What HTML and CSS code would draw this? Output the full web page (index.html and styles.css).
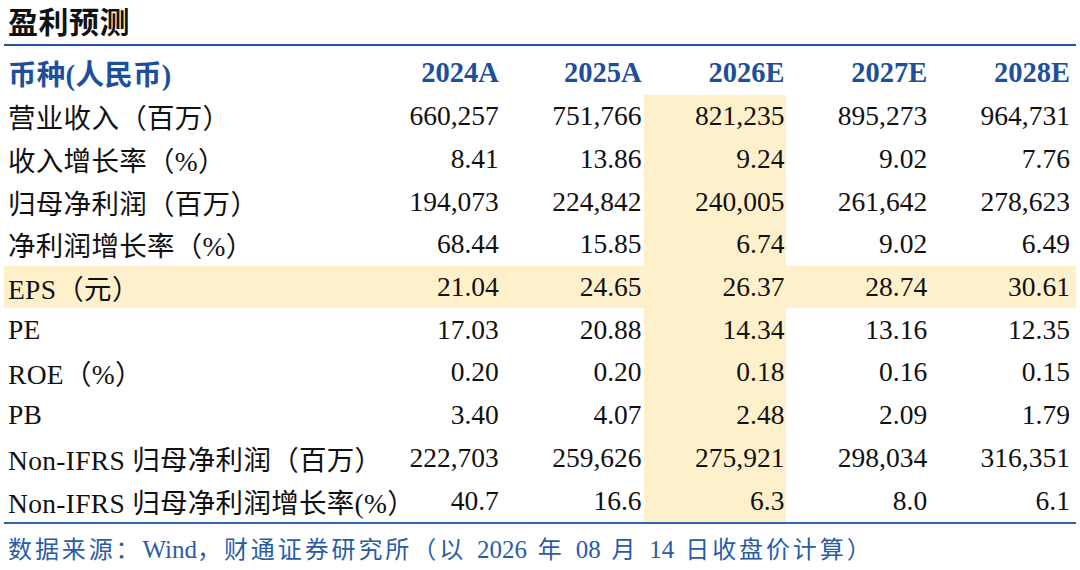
FILE: index.html
```html
<!DOCTYPE html>
<html lang="zh-CN">
<head>
<meta charset="utf-8">
<title>盈利预测</title>
<link rel="stylesheet" href="styles.css">
</head>
<body>
<div class="page">
  <h1 class="title">盈利预测</h1>
  <div class="table">
    <div class="row head">
      <div class="label">币种(人民币)</div>
      <div class="cell">2024A</div>
      <div class="cell">2025A</div>
      <div class="cell">2026E</div>
      <div class="cell">2027E</div>
      <div class="cell">2028E</div>
    </div>
    <div class="row">
      <div class="label">营业收入（百万）</div>
      <div class="cell">660,257</div>
      <div class="cell">751,766</div>
      <div class="cell hl">821,235</div>
      <div class="cell">895,273</div>
      <div class="cell">964,731</div>
    </div>
    <div class="row">
      <div class="label">收入增长率（%）</div>
      <div class="cell">8.41</div>
      <div class="cell">13.86</div>
      <div class="cell hl">9.24</div>
      <div class="cell">9.02</div>
      <div class="cell">7.76</div>
    </div>
    <div class="row">
      <div class="label">归母净利润（百万）</div>
      <div class="cell">194,073</div>
      <div class="cell">224,842</div>
      <div class="cell hl">240,005</div>
      <div class="cell">261,642</div>
      <div class="cell">278,623</div>
    </div>
    <div class="row">
      <div class="label">净利润增长率（%）</div>
      <div class="cell">68.44</div>
      <div class="cell">15.85</div>
      <div class="cell hl">6.74</div>
      <div class="cell">9.02</div>
      <div class="cell">6.49</div>
    </div>
    <div class="row hlrow">
      <div class="label">EPS（元）</div>
      <div class="cell">21.04</div>
      <div class="cell">24.65</div>
      <div class="cell">26.37</div>
      <div class="cell">28.74</div>
      <div class="cell">30.61</div>
    </div>
    <div class="row">
      <div class="label">PE</div>
      <div class="cell">17.03</div>
      <div class="cell">20.88</div>
      <div class="cell hl">14.34</div>
      <div class="cell">13.16</div>
      <div class="cell">12.35</div>
    </div>
    <div class="row">
      <div class="label">ROE（%）</div>
      <div class="cell">0.20</div>
      <div class="cell">0.20</div>
      <div class="cell hl">0.18</div>
      <div class="cell">0.16</div>
      <div class="cell">0.15</div>
    </div>
    <div class="row">
      <div class="label">PB</div>
      <div class="cell">3.40</div>
      <div class="cell">4.07</div>
      <div class="cell hl">2.48</div>
      <div class="cell">2.09</div>
      <div class="cell">1.79</div>
    </div>
    <div class="row">
      <div class="label">Non-IFRS 归母净利润（百万）</div>
      <div class="cell">222,703</div>
      <div class="cell">259,626</div>
      <div class="cell hl">275,921</div>
      <div class="cell">298,034</div>
      <div class="cell">316,351</div>
    </div>
    <div class="row">
      <div class="label">Non-IFRS 归母净利润增长率(%）</div>
      <div class="cell">40.7</div>
      <div class="cell">16.6</div>
      <div class="cell hl">6.3</div>
      <div class="cell">8.0</div>
      <div class="cell">6.1</div>
    </div>
  </div>
  <p class="note">数据来源：<span class="lat">Wind</span>，财通证券研究所（以 <span class="lat">2026</span> 年 <span class="lat">08</span> 月 <span class="lat">14</span> 日收盘价计算）</p>
</div>
</body>
</html>
```

FILE: styles.css
```css
html, body {
  margin: 0;
  padding: 0;
  background: #ffffff;
}

.page {
  width: 1072px;
  margin-left: 4px;
  font-family: "Liberation Serif", "Noto Sans CJK SC", serif;
  color: #111111;
}

.title {
  margin: 0;
  height: 44px;
  line-height: 46px;
  padding-left: 4px;
  font-size: 30px;
  font-weight: 700;
  letter-spacing: 0.5px;
  color: #111111;
  border-bottom: 2px solid #2257a5;
}

.table {
  border-bottom: 2px solid #2f66ae;
}

.row {
  display: grid;
  grid-template-columns: 354px repeat(5, 142.8px);
  height: 42.7px;
  font-size: 27.5px;
}

.row.head {
  height: 49px;
  font-size: 28.5px;
  font-weight: 700;
  color: #1d4f9c;
}

.label,
.cell {
  display: flex;
  align-items: center;
  white-space: nowrap;
}

.label {
  padding-left: 4px;
  letter-spacing: 0.3px;
}

.cell {
  justify-content: flex-end;
  padding-right: 2px;
}

.head .label,
.head .cell {
  padding-top: 4px;
}

.hl,
.hlrow {
  background: #fff0cc;
}

.note {
  margin: 0;
  height: 46px;
  line-height: 52px;
  padding-left: 4px;
  font-size: 24px;
  letter-spacing: 2.9px;
  word-spacing: 2px;
  color: #2a5ca6;
}

.note .lat {
  font-size: 25px;
  letter-spacing: 0;
}
```
